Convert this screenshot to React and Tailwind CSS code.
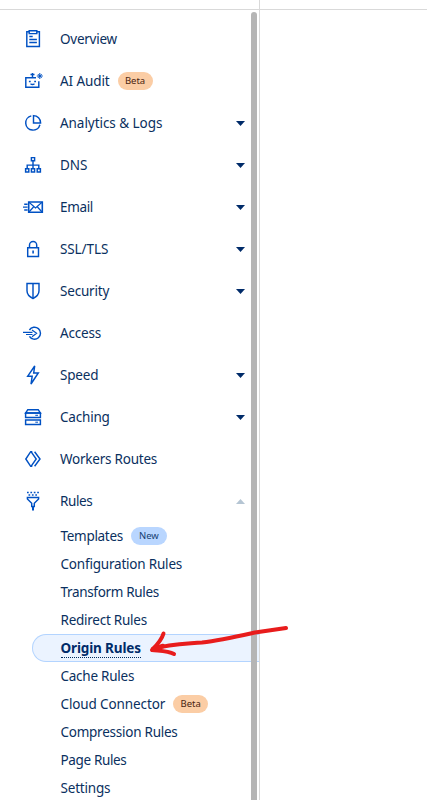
const icons = {
  overview: (
    <>
      <path d="M8 4.8H5.8v14.6h12.6V4.8H16" />
      <path d="M8.2 3.8h7.6v2.8H8.2z" />
      <path d="M8.3 9.5h3.4M8.3 12.5h7.6M8.3 15.5h7.6" />
    </>
  ),
  audit: (
    <>
      <path d="M15 8.7H4.8v9.6h13v-6" />
      <path d="M11.500 9V4M9.500 5.500h4" />
      <path d="M7.9 12.500h1.8M13.200 12.500h1.800" strokeWidth="1.7" />
      <path d="M9.500 14.700c1.300 1.100 2.700 1.100 4 0" strokeWidth="1.300" />
      <path d="M18.800 4v6M15.800 7h6M16.900 5.100l3.800 3.800M20.700 5.100l-3.800 3.800" strokeWidth="1" />
    </>
  ),
  analytics: (
    <>
      <path d="M10.3 4.9a7.2 7.2 0 1 0 8.6 8.8" />
      <path d="M12.5 4.6v7.3h7.1a7.2 7.2 0 0 0-7.1-7.3z" />
    </>
  ),
  dns: (
    <>
      <path d="M10.4 4.6h3.2v3.2h-3.2zM4.6 15.8h3.2V19H4.6zM10.4 15.8h3.2V19h-3.2zM16.2 15.8h3.2V19h-3.2z" />
      <path d="M12 7.8v8M6.2 15.8v-3.7h11.6v3.7" />
    </>
  ),
  email: (
    <>
      <path d="M7.7 7h13.6v10.2H7.7z" strokeWidth="1.6" />
      <path d="M8 7.3l6.5 5.6L21 7.3M8 17l4.5-5M21 17l-4.5-5" strokeWidth="1.2" />
      <path d="M3.2 9.2h3.4M2 12.1h4.6M3.2 15h3.4" />
    </>
  ),
  lock: (
    <>
      <path d="M6.7 10.7h10.8v8.7H6.7z" />
      <path d="M8.5 10.5V8.1a3.6 3.6 0 0 1 7.2 0v2.4" />
      <path d="M12.1 13.5v2.9" strokeWidth="1.6" />
    </>
  ),
  shield: (
    <>
      <path d="M6 4.4h12v7.4c0 3.4-2.4 6-6 7.7-3.6-1.7-6-4.3-6-7.7z" />
      <path d="M12 4.5v14.8" />
    </>
  ),
  access: (
    <>
      <path d="M8.4 9a6 6 0 1 1 0 6.4" />
      <path d="M2 11.3h9.500M5 13.500h6.500M11 9l4.600 3.300L11 15.700" strokeWidth="1.2" />
    </>
  ),
  speed: <path d="M13.700 3L6.700 13.200h4.500L10 21l7.300-11h-4.600z" />,
  caching: (
    <>
      <path d="M6.8 4.7h10.4l2.200 3.300H4.600z" />
      <path d="M4.6 8h14.8v4.500H4.600zM4.600 14.900h14.800v4.500H4.600z" />
      <path d="M14.300 10.300h2.700M14.300 17.200h2.700" strokeWidth="1" />
    </>
  ),
  workers: (
    <>
      <path d="M11.300 4.700H9.700L4.800 12l4.900 7.300h1.600" />
      <path d="M10.200 4.800L15.200 12l-5 7.200M13.600 4.800L19 12l-5.400 7.200" />
    </>
  ),
  rules: (
    <>
      <path d="M6 3.500h12M7.500 6.100h9" strokeDasharray="1.7 1.7" strokeWidth="1.5" />
      <path d="M6.400 8.500h11.200v1.500l-4.300 4.200v3.300h-2.600v-3.300L6.400 10z" />
      <path d="M12 17v4.500" strokeWidth="2" />
    </>
  ),
};

function Icon({ name }) {
  return (
    <svg className="h-6 w-6 shrink-0" viewBox="0 0 24 24" fill="none" stroke="#0051c3" strokeWidth="1.45">
      {icons[name]}
    </svg>
  );
}

const items = [
  { icon: "overview", label: "Overview", track: "tracking-[-0.25px]" },
  { icon: "audit", label: "AI Audit", track: "tracking-[-0.1px]", badge: "Beta" },
  { icon: "analytics", label: "Analytics & Logs", track: "tracking-[-0.05px]", arrow: "down" },
  { icon: "dns", label: "DNS", track: "tracking-[-0.1px]", arrow: "down" },
  { icon: "email", label: "Email", track: "tracking-[-0.35px]", arrow: "down" },
  { icon: "lock", label: "SSL/TLS", track: "tracking-[-0.1px]", arrow: "down" },
  { icon: "shield", label: "Security", track: "tracking-[-0.2px]", arrow: "down" },
  { icon: "access", label: "Access", track: "tracking-[-0.2px]" },
  { icon: "speed", label: "Speed", track: "tracking-[-0.2px]", arrow: "down" },
  { icon: "caching", label: "Caching", track: "tracking-[-0.2px]", arrow: "down" },
  { icon: "workers", label: "Workers Routes", track: "tracking-[-0.23px]" },
  { icon: "rules", label: "Rules", track: "tracking-[-0.4px]", arrow: "up" },
];

const rules = [
  { label: "Templates", track: "tracking-[-0.3px]", badge: "New" },
  { label: "Configuration Rules", track: "tracking-[-0.2px]" },
  { label: "Transform Rules", track: "tracking-[-0.33px]" },
  { label: "Redirect Rules", track: "tracking-[-0.25px]" },
  { label: "Origin Rules", track: "tracking-[-0.15px]", active: true },
  { label: "Cache Rules", track: "tracking-[-0.25px]" },
  { label: "Cloud Connector", track: "tracking-[-0.12px]", badge: "Beta" },
  { label: "Compression Rules", track: "tracking-[-0.25px]" },
  { label: "Page Rules", track: "tracking-[-0.35px]" },
  { label: "Settings", track: "tracking-[-0.2px]" },
];

function Badge({ text }) {
  const color = text === "New" ? "bg-[#b9d6ff] text-[#173f73]" : "bg-[#fbcda5] text-[#4a2410]";
  return (
    <span className={`ml-2 flex h-[18px] items-center justify-center rounded-full text-[9.5px] ${text === "New" ? "w-9" : "w-[35px]"} ${color}`}>
      {text}
    </span>
  );
}

function Caret({ dir }) {
  return (
    <svg className="ml-auto mr-3.5 h-[5px] w-[9px]" viewBox="0 0 9 5">
      {dir === "down" ? <path d="M0 0h9L4.5 5z" fill="#002b69" /> : <path d="M0 5h9L4.5 0z" fill="#b5c5d3" />}
    </svg>
  );
}

export default function App() {
  return (
    <div className="relative flex h-[800px] w-[427px] flex-col overflow-hidden bg-white font-['Noto_Sans','Open_Sans',sans-serif] text-[13.5px] text-[#0a3060]">
      <header className="flex h-2.5 shrink-0 border-b border-[#d9d9d9]">
        <div className="w-[260px] border-r border-[#d9d9d9]" />
      </header>
      <div className="flex min-h-0 flex-1">
        <aside className="relative w-[260px] border-r border-[#d9d9d9] pt-2">
          <nav>
            {items.map((item) => (
              <div key={item.label} className="flex h-[42px] items-center pl-[21px]">
                <Icon name={item.icon} />
                <span className={`ml-[15px] whitespace-nowrap ${item.track}`}>{item.label}</span>
                {item.badge && <Badge text={item.badge} />}
                {item.arrow && <Caret dir={item.arrow} />}
              </div>
            ))}
            {rules.map((rule) =>
              rule.active ? (
                <div key={rule.label} className="ml-8 flex h-7 items-center rounded-l-full border border-r-0 border-[#b3d4ff] bg-[#ebf3ff] pl-[27.5px]">
                  <span className={`mt-px whitespace-nowrap border-b border-dotted border-[#002b5c] font-bold leading-[17px] text-[#002b69] ${rule.track}`}>{rule.label}</span>
                </div>
              ) : (
                <div key={rule.label} className="flex h-7 items-center pl-[60.5px]">
                  <span className={`whitespace-nowrap ${rule.track}`}>{rule.label}</span>
                  {rule.badge && <Badge text={rule.badge} />}
                </div>
              )
            )}
          </nav>
          <div className="absolute right-0.5 top-0.5 h-[820px] w-1.5 rounded-full bg-[#b5b5b5]" />
        </aside>
        <main className="flex-1" />
      </div>
      <svg className="absolute left-[145px] top-[620px] h-10 w-[150px]" viewBox="145 620 150 40" fill="none" stroke="#e81c1c" strokeLinecap="round" strokeLinejoin="round">
        <path d="M286 628L255 632.5C235 637 220 640.500 202 642.500C185 644 170 644 153 649" strokeWidth="4" />
        <path d="M163.500 633.500C162 639 159 643 152 650C160 651 168 651 174 654" strokeWidth="4" />
        <path d="M153.500 649L163 646" strokeWidth="4.500" />
      </svg>
    </div>
  );
}
